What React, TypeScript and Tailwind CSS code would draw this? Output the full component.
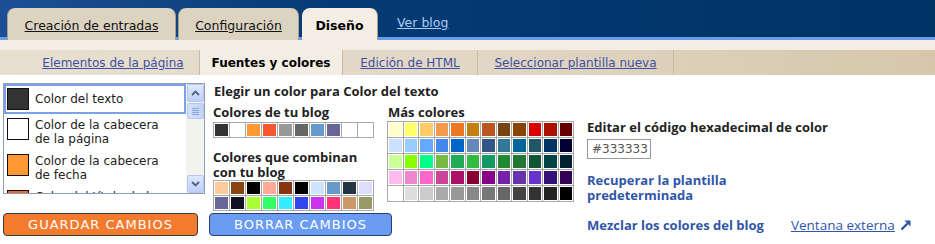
import React from 'react';

const blogColors = ['#333333', '#ffffff', '#ff9933', '#f5582f', '#999999', '#666666', '#6699cc', '#666699', '#ffffff', '#ffffff'];

const matchColors = [
  '#ffcc99', '#884411', '#000000', '#ffaa99', '#883311', '#000000', '#cce4ff', '#6699cc', '#223344', '#ddddff',
  '#666699', '#111122', '#aaff33', '#33ff66', '#33eeff', '#3344ee', '#cc33ee', '#ff3377', '#cc9966', '#999966',
];

const moreColors = [
  '#ffffcc', '#ffff66', '#ffcc66', '#f49a4c', '#ee7722', '#c47f11', '#bb5522', '#774411', '#884400', '#dd0000', '#aa1100', '#660000',
  '#cce0ff', '#99ccff', '#66aaff', '#4488ee', '#0066cc', '#6688bb', '#335588', '#337799', '#006699', '#225566', '#003366', '#000033',
  '#ccff99', '#88ff00', '#00ff88', '#77bb44', '#22aa55', '#33bb44', '#119966', '#228833', '#227733', '#115533', '#004444', '#002233',
  '#ffbbee', '#ee88cc', '#ff66cc', '#cc4499', '#aa1166', '#880033', '#880088', '#7722aa', '#6633aa', '#6633cc', '#331177', '#330055',
  '#ffffff', '#dddddd', '#cccccc', '#aaaaaa', '#999999', '#888888', '#777777', '#666666', '#444444', '#333333', '#222222', '#000000',
];

const listItems = [
  { color: '#333333', lines: ['Color del texto'], selected: true },
  { color: '#ffffff', lines: ['Color de la cabecera', 'de la página'] },
  { color: '#ff9933', lines: ['Color de la cabecera', 'de fecha'] },
  { color: '#ee6633', lines: ['Color del título de la', 'entrada'] },
];

// Swatch grid (gray lines, white inner border per cell)
const SwatchGrid = ({ colors, gridClass, cellClass }: { colors: string[]; gridClass: string; cellClass: string }) => (
  <div className={`grid w-fit gap-px bg-[#a9a9a9] p-px ${gridClass}`}>
    {colors.map((c, i) => (
      <div key={i} className={`border border-white ${cellClass}`} style={{ backgroundColor: c }} />
    ))}
  </div>
);

const Chevron = ({ up }: { up?: boolean }) => (
  <svg width="9" height="6" viewBox="0 0 9 6">
    <polyline
      points={up ? '1,5 4.5,1.5 8,5' : '1,1 4.5,4.5 8,1'}
      fill="none"
      stroke="#4d6185"
      strokeWidth="1.8"
    />
  </svg>
);

const ScrollButton = ({ up }: { up?: boolean }) => (
  <div className="flex h-[18px] w-[17px] items-center justify-center rounded-[2px] border border-[#b7c8f0] bg-linear-to-b from-[#e0e9fd] to-[#bdcff8]">
    <Chevron up={up} />
  </div>
);

const Scrollbar = () => (
  <div className="flex w-[18px] flex-col bg-[#f3f3ee] pl-px">
    <ScrollButton up />
    <div className="mt-px flex h-[16px] w-[17px] flex-col items-center justify-center gap-px rounded-[2px] border border-[#b7c8f0] bg-linear-to-r from-[#d4e0fb] to-[#c2d3f8]">
      <div className="h-px w-[7px] bg-[#8ea5d8]" />
      <div className="h-px w-[7px] bg-[#8ea5d8]" />
      <div className="h-px w-[7px] bg-[#8ea5d8]" />
      <div className="h-px w-[7px] bg-[#8ea5d8]" />
    </div>
    <div className="flex-1" />
    <ScrollButton />
  </div>
);

const ListBox = () => (
  <div className="row-span-2 flex h-[111px] w-[202px] self-start overflow-hidden border border-[#8f9fb2] bg-white">
    <div className="flex-1 overflow-hidden">
      {listItems.map((item, i) => (
        <div
          key={i}
          className={`flex items-center gap-[6px] border-2 py-[2px] pl-px ${item.selected ? 'border-[#7ba2e6]' : 'border-transparent'}`}
        >
          <div className="h-[22px] w-[22px] shrink-0 self-start border border-[#111]" style={{ backgroundColor: item.color }} />
          <div className="leading-[14px] text-[#222]">
            {item.lines.map((l, j) => (
              <div key={j}>{l}</div>
            ))}
          </div>
        </div>
      ))}
    </div>
    <Scrollbar />
  </div>
);

const ExternalArrow = () => (
  <svg width="12" height="12" viewBox="0 0 12 12" className="ml-[5px]">
    <line x1="1.5" y1="10.5" x2="8" y2="4" stroke="#3156a8" strokeWidth="2.4" />
    <polygon points="4.5,1.5 10.5,1.5 10.5,7.5" fill="#3156a8" />
  </svg>
);

export default function App() {
  return (
    <div className="h-[244px] w-[935px] overflow-hidden bg-white font-['DejaVu_Sans',sans-serif] text-[12px] text-[#222]">
      {/* Top tabs */}
      <div className="flex h-[40px] items-end border-b-[3px] border-[#6b9be6] bg-linear-to-r from-[#1d4f95] via-[#053b74] via-35% to-[#003366] pl-[7px]">
        <div className="-mb-[3px] flex h-[32px] w-[169px] items-center justify-center rounded-t-[8px] border-x border-[#aaa08c] bg-[#ddd3c1] pt-[5px] text-[12.5px]">
          <span className="text-[#111] underline">Creación de entradas</span>
        </div>
        <div className="-mb-[3px] ml-[2px] flex h-[32px] w-[121px] items-center justify-center rounded-t-[8px] border-x border-[#aaa08c] bg-[#ddd3c1] pt-[5px] text-[12.5px]">
          <span className="text-[#111] underline">Configuración</span>
        </div>
        <div className="-mb-[3px] ml-[3px] flex h-[32px] w-[76px] items-center justify-center rounded-t-[8px] border-r border-[#aaa08c] bg-[#f4ede3] pt-[5px] text-[12.5px] font-bold">
          <span className="text-black">Diseño</span>
        </div>
        <div className="ml-[19px] flex h-[29px] items-center pt-[2px] text-[12.5px]">
          <span className="text-[#a9cbf8] underline">Ver blog</span>
        </div>
      </div>

      <div className="h-[10px] bg-[#f4ede3]" />

      {/* Sub tabs */}
      <div className="flex h-[25px] bg-linear-to-r from-[#e8dfd0] via-[#e2d7c5] to-[#d6c7ac] pl-[27px]">
        <div className="flex w-[173px] items-center justify-center border-r border-[#c8baa3]">
          <span className="text-[#3d50a3] underline">Elementos de la página</span>
        </div>
        <div className="flex w-[143px] items-center justify-center border-r border-[#c8baa3] bg-[#f4ede3] font-bold text-black">
          Fuentes y colores
        </div>
        <div className="flex w-[135px] items-center justify-center border-r border-[#c8baa3]">
          <span className="text-[#3d50a3] underline">Edición de HTML</span>
        </div>
        <div className="flex w-[196px] items-center justify-center border-r border-[#c8baa3]">
          <span className="text-[#3d50a3] underline">Seleccionar plantilla nueva</span>
        </div>
      </div>

      {/* Content */}
      <div className="grid grid-cols-[202px_182px_200px_1fr] pl-[3px] pt-[8px]">
        <ListBox />

        <div className="col-span-3 h-[17px] pl-[9px] pt-px font-['Open_Sans',sans-serif] text-[13px] leading-[15px] font-bold text-[#222]">
          Elegir un color para Color del texto
        </div>

        {/* Blog colours */}
        <div className="flex flex-col pl-[8px] font-['Open_Sans',sans-serif] text-[13px] font-bold">
          <div className="mt-[5px] leading-[14px]">Colores de tu blog</div>
          <div className="mt-[3px]">
            <SwatchGrid colors={blogColors} gridClass="grid-cols-[repeat(10,15px)]" cellClass="h-[14px]" />
          </div>
          <div className="mt-[12px] leading-[15px]">
            Colores que combinan
            <br />
            con tu blog
          </div>
          <SwatchGrid colors={matchColors} gridClass="grid-cols-[repeat(10,15px)]" cellClass="h-[14px]" />
        </div>

        {/* More colours */}
        <div className="flex flex-col font-['Open_Sans',sans-serif] text-[13px] font-bold">
          <div className="mt-[5px] pl-px leading-[14px]">Más colores</div>
          <div className="mt-[2px]">
            <SwatchGrid colors={moreColors} gridClass="grid-cols-[repeat(12,14.5px)]" cellClass="h-[15px]" />
          </div>
        </div>

        {/* Hex editor */}
        <div className="flex flex-col font-['Open_Sans',sans-serif] text-[13px] font-bold">
          <div className="mt-[20px] leading-[14px]">Editar el código hexadecimal de color</div>
          <div className="mt-[5px] flex h-[20px] w-[64px] items-center border border-[#999] pl-[4px] font-['DejaVu_Sans',sans-serif] text-[12px] font-normal text-[#555]">
            #333333
          </div>
          <div className="mt-[14px] leading-[15px] text-[#3156a8]">
            Recuperar la plantilla
            <br />
            predeterminada
          </div>
        </div>

        {/* Buttons row */}
        <div className="pt-[2px]">
          <button className="flex h-[23px] w-[195px] items-center justify-center rounded-[4px] border border-[#3b3b3b] bg-[#f47b2e] text-[13px] tracking-[1px] text-white">
            GUARDAR CAMBIOS
          </button>
        </div>
        <div className="col-span-2 pl-[4px] pt-[2px]">
          <button className="flex h-[23px] w-[183px] items-center justify-center rounded-[4px] border border-[#2d3d6e] bg-[#6a9cf2] text-[13px] tracking-[1px] text-white">
            BORRAR CAMBIOS
          </button>
        </div>
        <div className="flex items-center pt-[3px] font-['Open_Sans',sans-serif] text-[13px] leading-[14px] text-[#3156a8]">
          <span className="font-bold">Mezclar los colores del blog</span>
          <span className="ml-[27px] text-[13.5px] underline">Ventana externa</span>
          <ExternalArrow />
        </div>
      </div>
    </div>
  );
}
